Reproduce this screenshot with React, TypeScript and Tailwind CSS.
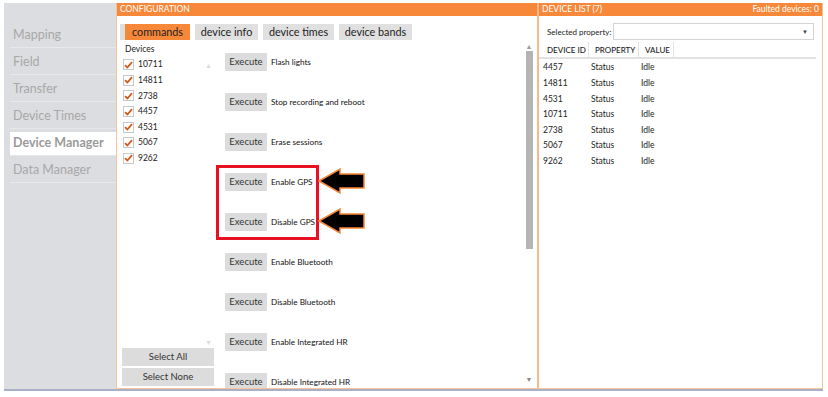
import React from 'react';

const navItems = ['Mapping', 'Field', 'Transfer', 'Device Times', 'Device Manager', 'Data Manager'];
const devices = ['10711', '14811', '2738', '4457', '4531', '5067', '9262'];
const commands = [
  'Flash lights',
  'Stop recording and reboot',
  'Erase sessions',
  'Enable GPS',
  'Disable GPS',
  'Enable Bluetooth',
  'Disable Bluetooth',
  'Enable Integrated HR',
  'Disable Integrated HR',
];
const rows = ['4457', '14811', '4531', '10711', '2738', '5067', '9262'];
const tabs = [
  { label: 'commands', w: 'w-[65px]' },
  { label: 'device info', w: 'w-[63px]' },
  { label: 'device times', w: 'w-[71px]' },
  { label: 'device bands', w: 'w-[73px]' },
];

const font = { fontFamily: 'Lato, "Noto Sans", sans-serif' };

// Annotation arrow pointing left
const Arrow = ({ className }: { className: string }) => (
  <svg className={className} width="48" height="26" viewBox="0 0 48 26">
    <polygon
      points="1,13 22,1 22,6 46,6 46,20 22,20 22,25"
      fill="#000"
      stroke="#f7883a"
      strokeWidth="1.5"
      strokeLinejoin="miter"
    />
  </svg>
);

const Check = () => (
  <span className="w-[11px] h-[11px] border border-[#c8c8c8] bg-white flex items-center justify-center">
    <svg width="9" height="8" viewBox="0 0 9 8">
      <path d="M1 4.2 L3.4 6.5 L8 1.2" fill="none" stroke="#d4581a" strokeWidth="1.8" />
    </svg>
  </span>
);

export default function App() {
  return (
    <div className="w-[828px] h-[397px] bg-white pt-[3px] pl-[4px] pr-[5px]" style={font}>
      <div className="flex h-[388px] border-b-2 border-[#aab0c8]">
        {/* Sidebar */}
        <div className="w-[112px] bg-[#dcdde0] pt-[21px]">
          {navItems.map((item) => {
            const active = item === 'Device Manager';
            return (
              <div key={item} className="ml-[6px] mb-[3px] border-b border-[#e7e8ea]">
                <div
                  className={`h-[23px] flex items-center pl-[3px] text-[12.5px] ${
                    active ? 'bg-white font-bold text-[#9a9a9a]' : 'text-[#a8a8a8]'
                  }`}
                >
                  {item}
                </div>
              </div>
            );
          })}
        </div>

        {/* Configuration */}
        <div className="w-[423px] flex flex-col min-h-0 border-l border-[#f8c39b] border-r-2 border-r-[#f9b98a] border-b border-b-[#f8c39b]">
          <div className="h-[13px] bg-[#f7883a] text-white text-[8.5px] leading-[13px] pl-[3px]">CONFIGURATION</div>
          <div className="flex-1 min-h-0 flex flex-col bg-white overflow-hidden">
            {/* Tabs */}
            <div className="flex mt-[8px] ml-[3px] h-[16px] gap-[5px] shrink-0">
              <div className="w-[5px] bg-[#dedede] -mr-[5px]" />
              {tabs.map((t, i) => (
                <div
                  key={t.label}
                  className={`${t.w} text-center text-[10.8px] leading-[16px] text-[#222] ${
                    i === 0 ? 'bg-[#f7883a]' : 'bg-[#e0e0e0]'
                  }`}
                >
                  {t.label}
                </div>
              ))}
            </div>

            <div className="flex flex-1 min-h-0">
              {/* Devices column */}
              <div className="w-[92px] ml-[5px] flex flex-col pt-[4px]">
                <div className="text-[8.5px] text-[#222] pl-[3px] leading-[11px]">Devices</div>
                <div className="relative flex-1 pt-[2px]">
                  {devices.map((d) => (
                    <div key={d} className="h-[15.6px] flex items-center gap-[4px] pl-[1px]">
                      <Check />
                      <span className="text-[8.5px] text-[#222]">{d}</span>
                    </div>
                  ))}
                  <span className="absolute right-[2px] top-[5px] text-[7px] text-[#dcdcdc]">▲</span>
                  <span className="absolute right-[2px] bottom-[1px] text-[7px] text-[#dcdcdc]">▼</span>
                </div>
                <div className="flex flex-col gap-[2px] mb-[2px]">
                  <button className="h-[18px] bg-[#dcdcdc] text-[9.5px] text-[#333]">Select All</button>
                  <button className="h-[18px] bg-[#dcdcdc] text-[9.5px] text-[#333]">Select None</button>
                </div>
              </div>

              {/* Commands list */}
              <div className="relative flex-1 ml-[11px] pt-[13px]">
                {commands.map((c) => (
                  <div key={c} className="h-[40px] flex items-start gap-[4px]">
                    <button className="w-[42px] h-[18px] bg-[#dcdcdc] text-[9.5px] text-[#333]">Execute</button>
                    <span className="text-[8.2px] text-[#111] leading-[18px]">{c}</span>
                  </div>
                ))}
                {/* Annotation */}
                <div className="absolute left-[-9px] top-[125px] w-[103px] h-[75px] border-[3px] border-[#e81123]" />
                <Arrow className="absolute left-[93px] top-[128px]" />
                <Arrow className="absolute left-[93px] top-[168px]" />
              </div>

              {/* Scrollbar */}
              <div className="w-[8px] mr-[4px] flex flex-col items-center pt-[3px]">
                <span className="text-[7px] leading-[7px] text-[#9a9a9a]">▲</span>
                <div className="w-[7px] h-[198px] bg-[#b4b4b4] mt-[1px]" />
                <div className="flex-1" />
                <span className="text-[7px] leading-[7px] text-[#8a8a8a] mb-[5px]">▼</span>
              </div>
            </div>
          </div>
        </div>

        {/* Device list */}
        <div className="flex-1 flex flex-col border-r border-[#f8c39b] border-b border-b-[#f8c39b]">
          <div className="h-[13px] bg-[#f7883a] text-white text-[8.5px] leading-[13px] px-[3px] flex justify-between">
            <span>DEVICE LIST (7)</span>
            <span>Faulted devices: 0</span>
          </div>
          <div className="flex-1 bg-white">
            <div className="flex items-center gap-[2px] mt-[7px] ml-[8px] mr-[8px]">
              <span className="text-[8px] text-[#222] whitespace-nowrap shrink-0">Selected property:</span>
              <div className="flex-1 h-[17px] border border-[#d4d4d4] flex items-center justify-end pr-[5px]">
                <span className="text-[6px] text-[#444]">▼</span>
              </div>
            </div>
            <div className="flex h-[17px] mt-[2px] mr-[6px] border-b-2 border-[#e2e2e2] text-[8px] text-[#222] font-medium">
              <div className="w-[50px] border-r border-[#e2e2e2] pl-[8px] leading-[16px] whitespace-nowrap">DEVICE ID</div>
              <div className="w-[50px] border-r border-[#e2e2e2] pl-[6px] leading-[16px] whitespace-nowrap">PROPERTY</div>
              <div className="w-[35px] border-r border-[#e2e2e2] pl-[6px] leading-[16px]">VALUE</div>
            </div>
            <div className="pt-[1px]">
              {rows.map((r) => (
                <div key={r} className="flex h-[15.6px] items-center text-[8.5px] text-[#222]">
                  <span className="w-[52px] pl-[4px]">{r}</span>
                  <span className="w-[50px]">Status</span>
                  <span>Idle</span>
                </div>
              ))}
            </div>
          </div>
        </div>
      </div>
    </div>
  );
}
